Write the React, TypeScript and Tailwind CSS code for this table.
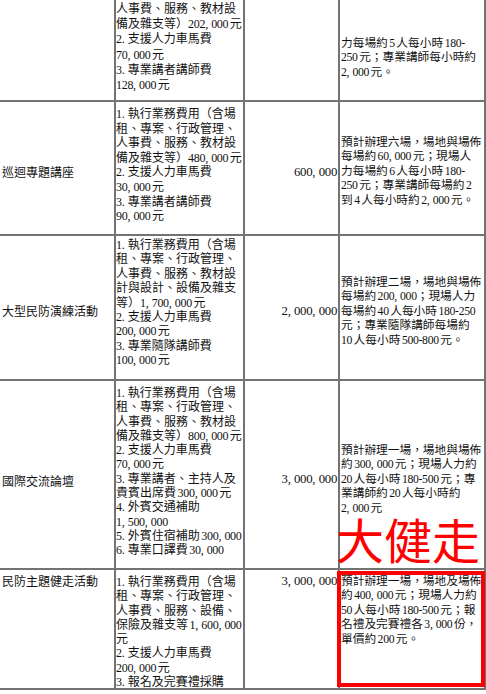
import React from "react";

type Row = {
  h: string;
  name?: string;
  namePad: string;
  items: string[];
  itemPad: string;
  itemLead: string;
  amount?: string;
  amountPad: string;
  note: string[];
  notePad: string;
};

const ROWS: Row[] = [
  {
    h: "h-[102px]",
    namePad: "pt-0",
    items: [
      "人事費、服務、教材設",
      "備及雜支等）202,000 元",
      "2.支援人力車馬費",
      "70,000 元",
      "3.專業講者講師費",
      "128,000 元",
    ],
    itemPad: "pt-[2px]",
    itemLead: "leading-[15.2px]",
    amountPad: "pt-0",
    note: ["力每場約 5 人每小時 180-", "250 元；專業講師每小時約", "2,000 元。"],
    notePad: "pt-[37px]",
  },
  {
    h: "h-[134px]",
    name: "巡迴專題講座",
    namePad: "pt-[64px]",
    items: [
      "1.執行業務費用（含場",
      "租、專案、行政管理、",
      "人事費、服務、教材設",
      "備及雜支等）480,000 元",
      "2.支援人力車馬費",
      "30,000 元",
      "3.專業講者講師費",
      "90,000 元",
    ],
    itemPad: "pt-[5px]",
    itemLead: "leading-[14.6px]",
    amount: "600,000",
    amountPad: "pt-[63px]",
    note: [
      "預計辦理六場，場地與場佈",
      "每場約 60,000 元；現場人",
      "力每場約 6 人每小時 180-",
      "250 元；專業講師每場約 2",
      "到 4 人每小時約 2,000 元。",
    ],
    notePad: "pt-[34px]",
  },
  {
    h: "h-[145px]",
    name: "大型民防演練活動",
    namePad: "pt-[69px]",
    items: [
      "1.執行業務費用（含場",
      "租、專案、行政管理、",
      "人事費、服務、教材設",
      "計與設計、設備及雜支",
      "等）1,700,000 元",
      "2.支援人力車馬費",
      "200,000 元",
      "3.專業隨隊講師費",
      "100,000 元",
    ],
    itemPad: "pt-[2px]",
    itemLead: "leading-[14.4px]",
    amount: "2,000,000",
    amountPad: "pt-[68px]",
    note: [
      "預計辦理二場，場地與場佈",
      "每場約 200,000；現場人力",
      "每場約 40 人每小時 180-250",
      "元；專業隨隊講師每場約",
      "10 人每小時 500-800 元。",
    ],
    notePad: "pt-[40px]",
  },
  {
    h: "h-[189px]",
    name: "國際交流論壇",
    namePad: "pt-[94px]",
    items: [
      "1.執行業務費用（含場",
      "租、專案、行政管理、",
      "人事費、服務、教材設",
      "備及雜支等）800,000 元",
      "2.支援人力車馬費",
      "70,000 元",
      "3.專業講者、主持人及",
      "貴賓出席費 300,000 元",
      "4.外賓交通補助",
      "1,500,000",
      "5.外賓住宿補助 300,000",
      "6.專業口譯費 30,000",
    ],
    itemPad: "pt-[5px]",
    itemLead: "leading-[14.3px]",
    amount: "3,000,000",
    amountPad: "pt-[91px]",
    note: [
      "預計辦理一場，場地與場佈",
      "約 300,000 元；現場人力約",
      "20 人每小時 180-500 元；專",
      "業講師約 20 人每小時約",
      "2,000 元",
    ],
    notePad: "pt-[63px]",
  },
  {
    h: "h-[120px]",
    name: "民防主題健走活動",
    namePad: "pt-[5px]",
    items: [
      "1.執行業務費用（含場",
      "租、專案、行政管理、",
      "人事費、服務、設備、",
      "保險及雜支等 1,600,000",
      "元",
      "2.支援人力車馬費",
      "200,000 元",
      "3.報名及完賽禮採購",
    ],
    itemPad: "pt-[5px]",
    itemLead: "leading-[14.3px]",
    amount: "3,000,000",
    amountPad: "pt-[4px]",
    note: [
      "預計辦理一場，場地及場佈",
      "約 400,000 元；現場人力約",
      "50 人每小時 180-500 元；報",
      "名禮及完賽禮各 3,000 份，",
      "單價約 200 元。",
    ],
    notePad: "pt-[5px]",
  },
];

// the scan sets digits and , . half-width
function Txt({ s }: { s: string }) {
  return (
    <>
      {s.split(/([0-9,.\-]+| )/).map((p, i) => {
        if (p === " ") return <span key={i} className="inline-block w-[0.13em]" />;
        if (/^[0-9,.\-]+$/.test(p))
          return (
            <span key={i} className="tracking-[-0.3px]">
              {p.split(/([,.])/).map((q, j) =>
                q === "," || q === "." ? (
                  <span key={j} className="inline-block w-[0.5em] text-left">
                    {q}
                  </span>
                ) : (
                  q
                )
              )}
            </span>
          );
        return p;
      })}
    </>
  );
}

function Lines({ lines }: { lines: string[] }) {
  return (
    <>
      {lines.map((l, i) => (
        <div key={i} className="whitespace-nowrap">
          <Txt s={l} />
        </div>
      ))}
    </>
  );
}

export default function App() {
  return (
    <div className="relative w-[486px] h-[694px] overflow-hidden bg-white text-[#121212] font-['Liberation_Serif','Noto_Sans_CJK_TC',serif]">
      {ROWS.map((r, i) => (
        <div
          key={i}
          className={`grid grid-cols-[116px_129px_95px_146px] border-b-2 border-[#737373] ${r.h}`}
        >
          <div className={`border-r-2 border-[#737373] pl-[2px] text-[12px] leading-[14.6px] ${r.namePad}`}>
            {r.name}
          </div>
          <div className={`border-r-2 border-[#737373] text-[12px] ${r.itemLead} ${r.itemPad}`}>
            <Lines lines={r.items} />
          </div>
          <div className={`border-r-2 border-[#737373] pr-[1px] text-right text-[12.8px] leading-[14.6px] ${r.amountPad}`}>
            {r.amount && <Txt s={r.amount} />}
          </div>
          <div className={`border-r-2 border-[#737373] pl-[1px] text-[11.7px] leading-[14.4px] ${r.notePad}`}>
            <Lines lines={r.note} />
          </div>
        </div>
      ))}

      {/* red annotation */}
      <div className="absolute left-[336px] top-[520px] font-['Noto_Sans_CJK_TC',sans-serif] text-[48px] leading-[36px] text-[#ff0000]">
        大健走
      </div>
      <div className="absolute left-[337px] top-[571px] w-[148px] h-[116px] border-4 border-[#ff0000]" />
    </div>
  );
}
